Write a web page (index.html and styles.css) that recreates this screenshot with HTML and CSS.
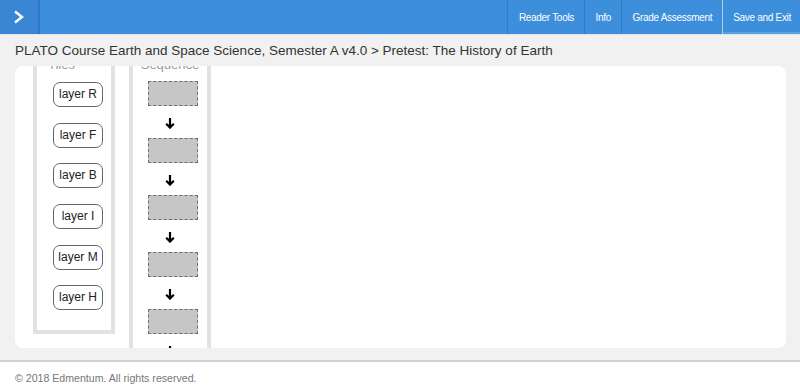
FILE: index.html
```html
<!DOCTYPE html>
<html lang="en">
<head>
  <meta charset="UTF-8">
  <title>Pretest: The History of Earth</title>
  <link rel="stylesheet" href="styles.css">
</head>
<body>
  <div class="topbar">
    <a class="toggle" href="#">
      <svg width="12" height="14" viewBox="0 0 12 14"><polyline points="2,1.5 9,7 2,12.5" fill="none" stroke="#fff" stroke-width="2.4"/></svg>
    </a>
    <div class="nav">
      <a href="#">Reader Tools</a>
      <a href="#">Info</a>
      <a href="#">Grade Assessment</a>
      <a href="#" class="exit">Save and Exit</a>
    </div>
  </div>

  <div class="page">
    <div class="crumb">PLATO Course Earth and Space Science, Semester A v4.0 &gt; Pretest: The History of Earth</div>

    <div class="panel">
      <div class="activity">
        <div class="col tiles">
          <div class="col-title">Tiles</div>
          <div class="tile">layer R</div>
          <div class="tile">layer F</div>
          <div class="tile">layer B</div>
          <div class="tile">layer I</div>
          <div class="tile">layer M</div>
          <div class="tile">layer H</div>
        </div>
        <div class="col seq">
          <div class="col-title center">Sequence</div>
          <div class="slot"></div>
          <div class="arrow"><svg width="10" height="11" viewBox="0 0 10 11"><path d="M5 0V9.5M1.2 5.8L5 9.6L8.8 5.8" fill="none" stroke="#000" stroke-width="2.2"/></svg></div>
          <div class="slot"></div>
          <div class="arrow"><svg width="10" height="11" viewBox="0 0 10 11"><path d="M5 0V9.5M1.2 5.8L5 9.6L8.8 5.8" fill="none" stroke="#000" stroke-width="2.2"/></svg></div>
          <div class="slot"></div>
          <div class="arrow"><svg width="10" height="11" viewBox="0 0 10 11"><path d="M5 0V9.5M1.2 5.8L5 9.6L8.8 5.8" fill="none" stroke="#000" stroke-width="2.2"/></svg></div>
          <div class="slot"></div>
          <div class="arrow"><svg width="10" height="11" viewBox="0 0 10 11"><path d="M5 0V9.5M1.2 5.8L5 9.6L8.8 5.8" fill="none" stroke="#000" stroke-width="2.2"/></svg></div>
          <div class="slot"></div>
          <div class="arrow"><svg width="10" height="11" viewBox="0 0 10 11"><path d="M5 0V9.5M1.2 5.8L5 9.6L8.8 5.8" fill="none" stroke="#000" stroke-width="2.2"/></svg></div>
          <div class="slot"></div>
        </div>
      </div>
    </div>
  </div>

  <div class="footer">&copy; 2018 Edmentum. All rights reserved.</div>
</body>
</html>
```

FILE: styles.css
```css
body {
  margin: 0;
  font-family: "Liberation Sans", Arial, sans-serif;
  background-color: #fff;
}

.topbar {
  display: flex;
  justify-content: space-between;
  height: 34px;
  background-color: #3d8edb;
  border-bottom: 1px solid #e4e4e4;
}

.toggle {
  width: 38px;
  display: flex;
  align-items: center;
  justify-content: center;
  background-color: #3886d4;
  border-right: 2px solid #2f78c2;
}

.nav {
  display: flex;
}

.nav a {
  display: flex;
  align-items: center;
  padding: 0 10px 0 10.5px;
  font-size: 10px;
  letter-spacing: -0.3px;
  color: #fff;
  text-decoration: none;
  border-left: 1px solid #2f7cc6;
}

.nav a.exit {
  padding: 0 9px 0 10px;
  border-left: 1px solid #a9cdf0;
  box-shadow: inset 0 -2px 0 #5aa2e6;
}

.page {
  background-color: #f1f1f1;
  padding: 0 14px 12px 15px;
  border-bottom: 2px solid #d2d2d2;
}

.crumb {
  height: 31px;
  line-height: 31px;
  font-size: 13.5px;
  color: #333;
}

.panel {
  height: 282px;
  background-color: #fff;
  border-radius: 8px;
  overflow: hidden;
}

.activity {
  display: flex;
  align-items: flex-start;
  gap: 14px;
  margin-top: -14px;
  padding-left: 18px;
}

.col {
  display: flex;
  flex-direction: column;
  border: 4px solid #e2e2e2;
}

.col-title {
  height: 18px;
  line-height: 18px;
  font-size: 13px;
  color: #999;
  margin-bottom: 8px;
  padding-left: 11px;
}

.col-title.center {
  padding-left: 0;
  text-align: center;
}

.tiles {
  width: 74px;
  padding-bottom: 20px;
}

.tile {
  width: 48px;
  height: 23px;
  margin-left: 16px;
  margin-bottom: 15.7px;
  border: 1px solid #666;
  border-radius: 7px;
  font-size: 12px;
  line-height: 23px;
  text-align: center;
  color: #222;
}

.tile:last-child {
  margin-bottom: 0;
}

.seq {
  width: 74px;
  height: 340px;
  border-bottom: none;
}

.seq .col-title {
  margin-bottom: 7px;
}

.slot {
  width: 48px;
  height: 23px;
  margin-left: 15px;
  background-color: #c6c6c6;
  border: 1px dashed #6e6e6e;
}

.arrow {
  height: 32px;
  display: flex;
  justify-content: center;
  padding-top: 12px;
  box-sizing: border-box;
}

.footer {
  padding: 10px 15px 9px;
  font-size: 10.6px;
  color: #777;
}
```
